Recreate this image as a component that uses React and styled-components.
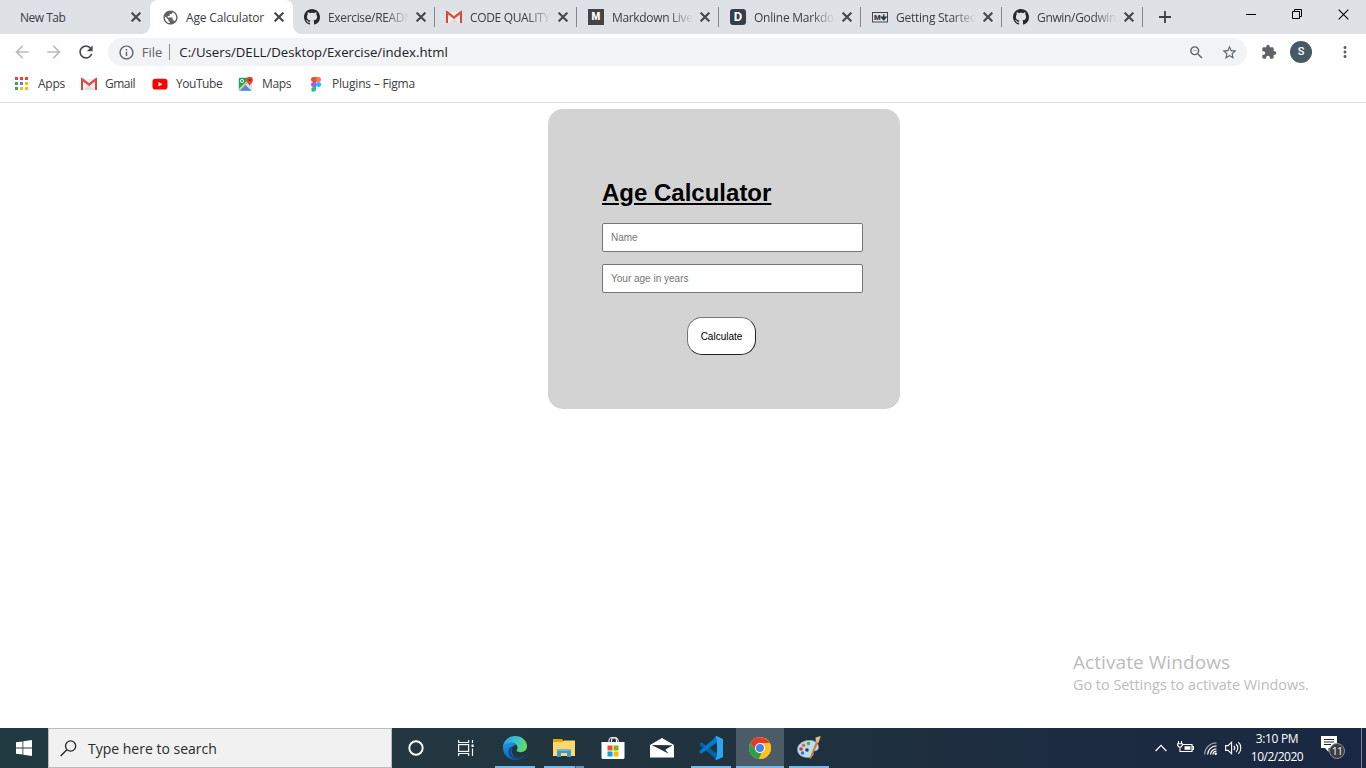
import React from 'react';
import styled, { createGlobalStyle, css } from 'styled-components';
import {
  MdArrowBack, MdArrowForward, MdRefresh, MdInfoOutline, MdZoomOut,
  MdStarBorder, MdExtension, MdMoreVert, MdPublic,
} from 'react-icons/md';

const GlobalStyle = createGlobalStyle`
  * { box-sizing: border-box; }
  body { margin: 0; overflow: hidden; font-family: "Open Sans", "Noto Sans", sans-serif; }
  svg { display: block; flex: none; }
`;

const Screen = styled.div`
  width: 1366px;
  height: 768px;
  display: flex;
  flex-direction: column;
  background: #fff;
`;

const Label = styled.span`
  flex: none;
  white-space: nowrap;
  font-size: ${(p) => p.$size || 12}px;
  letter-spacing: ${(p) => p.$track || 0}px;
  color: ${(p) => p.$color || '#3c4043'};
`;

/* ---------- tab strip ---------- */

const TabStrip = styled.div`
  height: 34px;
  flex: none;
  display: flex;
  background: #dee1e6;
`;

const Tab = styled.div`
  position: relative;
  width: ${(p) => p.$width}px;
  flex: none;
  display: flex;
  align-items: center;
  padding: 0 9.5px 0 ${(p) => p.$pad}px;
  ${(p) => p.$divider && css`
    &::after {
      content: '';
      position: absolute;
      right: 0;
      top: 7px;
      width: 1px;
      height: 20px;
      background: #85888c;
    }
  `}
  ${(p) => p.$active && css`
    background: #fff;
    border-radius: 8px 8px 0 0;
    &::before, &::after {
      content: '';
      position: absolute;
      bottom: 0;
      width: 8px;
      height: 8px;
    }
    &::before {
      left: -8px;
      background: radial-gradient(circle at 0 0, transparent 7.5px, #fff 8px);
    }
    &::after {
      right: -8px;
      background: radial-gradient(circle at 100% 0, transparent 7.5px, #fff 8px);
    }
  `}
`;

const TabIcon = styled.div`
  width: 16px;
  height: 16px;
  margin-right: 8px;
  flex: none;
`;

const TabTitle = styled.div`
  flex: 1;
  min-width: 0;
  overflow: hidden;
  margin-right: 7px;
  line-height: 18px;
  ${(p) => p.$fade && css`
    mask-image: linear-gradient(to right, #000 calc(100% - 24px), transparent);
  `}
`;

const LetterBadge = styled.div`
  width: 16px;
  height: 16px;
  display: flex;
  align-items: center;
  justify-content: center;
  border-radius: ${(p) => p.$radius}px;
  background: ${(p) => p.$bg};
  color: #fff;
  font: ${(p) => p.$weight} ${(p) => p.$size}px/16px "Roboto", sans-serif;
`;

const NewTabButton = styled.div`
  width: 44px;
  display: flex;
  align-items: center;
  justify-content: center;
`;

const WindowButtons = styled.div`
  margin-left: auto;
  display: flex;
  height: 28px;
`;

const WindowButton = styled.div`
  width: 46px;
  display: flex;
  align-items: center;
  justify-content: center;
`;

/* ---------- toolbar ---------- */

const Toolbar = styled.div`
  height: 36px;
  flex: none;
  display: flex;
  align-items: center;
  padding: 0 12px;
`;

const NavButton = styled.div`
  width: 20px;
  margin-right: 12px;
  display: flex;
  justify-content: center;
  color: ${(p) => (p.$disabled ? '#babcbe' : '#4a4d51')};
`;

const Omnibox = styled.div`
  width: 1150px;
  height: 28px;
  display: flex;
  align-items: center;
  padding: 0 9px 0 10px;
  border-radius: 14px;
  background: #f1f3f4;
  color: #5f6368;
`;

const OmniDivider = styled.div`
  width: 1px;
  height: 16px;
  margin: 0 9px 0 7px;
  background: #8c8f93;
`;

const OmniActions = styled.div`
  margin-left: auto;
  display: flex;
  gap: 16px;
`;

const ToolbarActions = styled.div`
  display: flex;
  align-items: center;
  margin-left: 14px;
  color: #5f6368;
`;

const Avatar = styled.div`
  width: 22px;
  height: 22px;
  margin: 0 24px 0 13px;
  border-radius: 50%;
  background: #455a64;
  color: #fff;
  text-align: center;
  font: 500 11px/22px "Roboto", sans-serif;
`;

/* ---------- bookmarks ---------- */

const Bookmarks = styled.div`
  height: 33px;
  flex: none;
  display: flex;
  padding: 0 0 5px 14px;
  border-bottom: 1px solid #d9dbde;
`;

const Bookmark = styled.div`
  width: ${(p) => p.$width}px;
  display: flex;
  align-items: center;
  gap: 8px;
`;

/* ---------- page ---------- */

const Page = styled.main`
  flex: 1;
  display: flex;
  flex-direction: column;
  align-items: flex-start;
  padding: 6px 57px 0 548px;
`;

const Card = styled.section`
  width: 352px;
  height: 300px;
  padding: 70px 37px 0 54px;
  border-radius: 15px;
  background: #d3d3d3;
  font-family: "Liberation Sans", Arial, sans-serif;
`;

const Heading = styled.h1`
  margin: 0 0 16px;
  font-size: 24px;
  line-height: 28px;
  font-weight: 700;
  color: #000;
  text-decoration: underline;
`;

const Field = styled.input`
  display: block;
  width: 261px;
  height: 29px;
  margin: 0 0 12px;
  padding: 0 8px;
  border: 1px solid #767676;
  border-radius: 2px;
  background: #fff;
  font: 10px "Liberation Sans", Arial, sans-serif;
  &::placeholder { color: #757575; }
`;

const Calculate = styled.button`
  display: block;
  width: 69px;
  height: 38px;
  margin: 24px 0 0 85px;
  padding: 0;
  border: 1px solid;
  border-color: #767676 #212121 #212121 #767676;
  border-radius: 15px;
  background: #fff;
  color: #000;
  font: 10px "Liberation Sans", Arial, sans-serif;
`;

const Watermark = styled.div`
  margin: auto 0 33px;
  align-self: flex-end;
  width: 236px;
  display: flex;
  flex-direction: column;
`;

const WatermarkLine = styled(Label)`
  line-height: ${(p) => p.$line}px;
  color: #bcbcbc;
`;

/* ---------- taskbar ---------- */

const Taskbar = styled.footer`
  height: 40px;
  flex: none;
  display: flex;
  background: linear-gradient(to right, #213a42 0, #22373f 30%, #20323f 55%, #1c2b40 80%, #1a2742 100%);
`;

const StartButton = styled.div`
  width: 48px;
  display: flex;
  align-items: center;
  justify-content: center;
`;

const SearchBox = styled.div`
  width: 344px;
  display: flex;
  align-items: center;
  gap: 11px;
  padding-left: 11px;
  border: 1px solid #bababa;
  background: #f1f1f1;
`;

const TaskItem = styled.div`
  position: relative;
  width: ${(p) => p.$width || 49}px;
  display: flex;
  align-items: center;
  justify-content: center;
  padding-right: 1px;
  ${(p) => p.$active && css`
    background: linear-gradient(#4c5c66, #4c5c66) 0 0 / 48px 100% no-repeat;
  `}
  ${(p) => p.$line && css`
    &::after {
      content: '';
      position: absolute;
      bottom: 0;
      left: ${p.$active ? 0 : 4}px;
      width: ${p.$active ? 48 : 40}px;
      height: 2px;
      background: ${p.$line === 'stack'
        ? 'linear-gradient(to right, #76b9ed 31px, #3d6480 31px, #3d6480 32px, #5c94bf 32px)'
        : '#76b9ed'};
    }
  `}
`;

const Tray = styled.div`
  margin-left: auto;
  display: flex;
  align-items: center;
  padding-right: 4px;
  border-right: 0;
`;

const Clock = styled.div`
  width: 60px;
  margin: 0 14px 0 5px;
  display: flex;
  flex-direction: column;
  align-items: center;
  line-height: 18px;
`;

const Notifications = styled.div`
  position: relative;
  width: 24px;
  height: 24px;
`;

const Count = styled.div`
  position: absolute;
  left: 8px;
  top: 7px;
  width: 16px;
  height: 16px;
  border: 1px solid #8b8f94;
  border-radius: 50%;
  background: #3a3d42;
  color: #fff;
  text-align: center;
  font-size: 10.5px;
  line-height: 14px;
  letter-spacing: -0.7px;
`;

const DesktopEdge = styled.div`
  width: 1px;
  height: 40px;
  margin-left: 16px;
  background: #7d8592;
`;

/* ---------- icons ---------- */

const Cross = ({ size = 8, width = 1.7, color = '#45484c' }) => (
  <svg width={size} height={size} viewBox="0 0 8 8">
    <path d="M.5 .5 7.5 7.5M7.5 .5 .5 7.5" stroke={color} strokeWidth={width} />
  </svg>
);

const GithubMark = () => (
  <svg width="16" height="16" viewBox="0 0 16 16" fill="#24292e">
    <path d="M8 0C3.58 0 0 3.58 0 8c0 3.54 2.29 6.53 5.47 7.59.4.07.55-.17.55-.38 0-.19-.01-.82-.01-1.49-2.01.37-2.53-.49-2.69-.94-.09-.23-.48-.94-.82-1.13-.28-.15-.68-.52-.01-.53.63-.01 1.08.58 1.23.82.72 1.21 1.87.87 2.33.66.07-.52.28-.87.51-1.07-1.78-.2-3.64-.89-3.64-3.95 0-.87.31-1.59.82-2.15-.08-.2-.36-1.02.08-2.12 0 0 .67-.21 2.2.82.64-.18 1.32-.27 2-.27.68 0 1.36.09 2 .27 1.53-1.04 2.2-.82 2.2-.82.44 1.1.16 1.92.08 2.12.51.56.82 1.27.82 2.15 0 3.07-1.87 3.75-3.65 3.95.29.25.54.73.54 1.48 0 1.07-.01 1.93-.01 2.2 0 .21.15.46.55.38A8.01 8.01 0 0 0 16 8c0-4.42-3.58-8-8-8z" />
  </svg>
);

const GmailIcon = () => (
  <svg width="16" height="16" viewBox="0 0 16 16">
    <path d="M1.5 3h13v11h-13z" fill="#f0eeee" />
    <path d="M3 13.8 8 9.5l5 4.3z" fill="#dcdada" />
    <path d="M1 14V3.2l7 5.3 7-5.3V14" fill="none" stroke="#d5483b" strokeWidth="2" />
    <path d="M1 3.2 8 8.6l7-5.4" fill="none" stroke="#de5145" strokeWidth="2.2" />
  </svg>
);

const MarkdownIcon = () => (
  <svg width="16" height="16" viewBox="0 0 16 16">
    <rect x=".5" y="3.5" width="15" height="9.5" fill="none" stroke="#45484c" />
    <text x="2" y="11" fontFamily="Roboto" fontWeight="900" fontSize="7.5" fill="#33363a">M</text>
    <path d="M11.7 5.2v4.5M9.4 8.2l2.3 2.6L14 8.2z" stroke="#33363a" strokeWidth="1.3" fill="#33363a" />
  </svg>
);

const AppsIcon = () => {
  const colors = ['#ea4335', '#ea4335', '#ea4335', '#34a853', '#4285f4', '#fbbc05', '#34a853', '#fbbc05', '#fbbc05'];
  return (
    <svg width="16" height="16" viewBox="0 0 16 16">
      {colors.map((fill, i) => (
        <rect key={i} x={1 + (i % 3) * 5} y={1 + Math.floor(i / 3) * 5} width="3" height="3" fill={fill} />
      ))}
    </svg>
  );
};

const YouTubeIcon = () => (
  <svg width="16" height="16" viewBox="0 0 16 16">
    <rect x=".5" y="2.8" width="15" height="10.8" rx="2.8" fill="#f00" />
    <path d="M6.5 5.9v4.6l4-2.3z" fill="#fff" />
  </svg>
);

const MapsIcon = () => (
  <svg width="16" height="16" viewBox="0 0 16 16">
    <rect x=".8" y="1.8" width="13" height="13" rx="1.2" fill="#1fa463" />
    <path d="M1 14.5 13.8 3v11.8H2z" fill="#e3e4e6" />
    <path d="M1.6 14.8 7.5 9l6 5.8z" fill="#4a8af4" />
    <path d="m1.2 13.5 10-10" stroke="#fbd34d" strokeWidth="1.5" />
    <circle cx="4" cy="5" r="1.6" fill="none" stroke="#fff" strokeWidth=".9" />
    <path d="M11.6 10.2c-.4-2.5-3-3.4-3-6.2a3 3 0 0 1 6.3 0c0 2.8-2.8 3.700-3.300 6.200z" fill="#ea4335" />
    <circle cx="11.700" cy="4" r="1.100" fill="#8c1d18" />
  </svg>
);

const FigmaIcon = () => (
  <svg width="16" height="16" viewBox="0 0 16 16">
    <path d="M8 1H5.500a2.500 2.500 0 0 0 0 5H8z" fill="#f24e1e" />
    <path d="M8 1h2.500a2.500 2.500 0 0 1 0 5H8z" fill="#ff7262" />
    <path d="M8 6H5.500a2.500 2.500 0 0 0 0 5H8z" fill="#a259ff" />
    <circle cx="10.500" cy="8.500" r="2.500" fill="#1abcfe" />
    <path d="M8 11H5.500A2.400 2.400 0 1 0 8 13.300z" fill="#0acf83" />
  </svg>
);

const WindowsLogo = () => (
  <svg width="16" height="16" viewBox="0 0 16 16" fill="#fff">
    <path d="M0 2.300 6.500 1.400v6.200H0zM7.300 1.300 16 0v7.600H7.300zM0 8.400h6.500v6.200L0 13.700zM7.300 8.400H16V16l-8.700-1.300z" />
  </svg>
);

const SearchIcon = () => (
  <svg width="17" height="17" viewBox="0 0 17 17" fill="none" stroke="#222" strokeWidth="1.300">
    <circle cx="10.600" cy="6" r="5.100" />
    <path d="M6.900 9.700.6 16" />
  </svg>
);

const TaskViewIcon = () => (
  <svg width="18" height="16" viewBox="0 0 18 16" fill="none" stroke="#f4f6f6" strokeWidth="1.200">
    <rect x="1.600" y="4.600" width="10" height="6.800" />
    <path d="M1.600 0v2.500h10V0M1.600 16v-2.500h10V16M15.500 0v3M15.500 8.500V16" />
    <rect x="14.500" y="4.500" width="2.200" height="2.500" fill="#fff" stroke="none" />
  </svg>
);

const EdgeIcon = () => (
  <svg width="24" height="24" viewBox="0 0 24 24">
    <defs>
      <linearGradient id="edgeTop" x1="0" y1=".3" x2="1" y2=".5">
        <stop offset="0" stopColor="#2aa5dc" />
        <stop offset=".5" stopColor="#35c1d0" />
        <stop offset="1" stopColor="#6bdc57" />
      </linearGradient>
      <linearGradient id="edgeLeft" x1="0" y1="0" x2=".4" y2="1">
        <stop offset="0" stopColor="#1f9be0" />
        <stop offset="1" stopColor="#0f63b8" />
      </linearGradient>
    </defs>
    <path d="M0 12C0 5 5.500 0 12 0c7.200 0 12 5 12 10 0 4-3 6.200-6.500 6.200-2.600 0-4-.9-4-1.900 0-.6 1-1 1-2.600C14.500 9 12 7 8.500 7 3.500 7 .4 10 0 12z" fill="url(#edgeTop)" />
    <path d="M0 12C.5 8.500 4 6.500 8 6.500c2.500 0 4.500 1 5.600 2.300C10 9 8.300 12 8.500 15c.3 4.200 4 7.600 7.500 8.200A12 12 0 0 1 0 12z" fill="url(#edgeLeft)" />
    <path d="M10 10.500c-2.200 2-2.800 5-1.500 7.700 2.400 4.800 9.500 4.500 13.700.6.400-.3.700 0 .4.400A12 12 0 0 1 14 23.800C8.500 23.500 5 19 5.500 14.800c.3-2.500 2.200-4 4.500-4.300z" fill="#114a8b" />
  </svg>
);

const ExplorerIcon = () => (
  <svg width="22" height="18" viewBox="0 0 22 18">
    <path d="M0 0h9l1.500 2H22v15H0z" fill="#e2a50c" />
    <path d="M0 3h9.500L11 1.500h11V17H0z" fill="#ffd868" />
    <path d="M4 18v-7.500h14V18h-4v-4H8v4z" fill="#3f97d8" />
    <path d="M4 10.500h14V12H4z" fill="#5fb2ea" />
  </svg>
);

const StoreIcon = () => (
  <svg width="24" height="24" viewBox="0 0 24 24">
    <path d="M8 7V4.500a3 3 0 0 1 3-3h1.500a3 3 0 0 1 3 3V7M10.500 6.500V4.600a3 3 0 0 1 3-3h.3a3.400 3.400 0 0 1 3.400 3.400V7" fill="none" stroke="#e8ebec" strokeWidth="1.100" />
    <path d="M.5 6h23v15.500a1.500 1.500 0 0 1-1.500 1.500H2A1.500 1.500 0 0 1 .5 21.500z" fill="#fff" />
    <path d="M6.500 9.500h5v5h-5z" fill="#f25022" />
    <path d="M12.500 9.500h5v5h-5z" fill="#7fba00" />
    <path d="M6.500 15.500h5v5h-5z" fill="#00a4ef" />
    <path d="M12.500 15.500h5v5h-5z" fill="#ffb900" />
  </svg>
);

const MailIcon = () => (
  <svg width="24" height="20" viewBox="0 0 24 20">
    <path d="M0 7 12 0l12 7v12.500H0z" fill="#fff" />
    <path d="m1.500 7 21 .2-7.200 4.600 3.500 4L9.500 11z" fill="#20323c" />
  </svg>
);

const VSCodeIcon = () => (
  <svg width="24" height="24" viewBox="0 0 24 24">
    <path d="m.5 7.800 1.800-1.600L18 17.800V24L1 9.200z" fill="#0065a9" />
    <path d="m.5 16.200 1.800 1.600L18 6.200V0L.7 14.800z" fill="#007acc" />
    <path d="M17.500 0 24 3v18l-6.500 3c-.6 0-1-.4-1-1L18 20V4l-1.500-3c0-.6.400-1 1-1z" fill="#2ba6f0" />
  </svg>
);

const ChromeIcon = () => (
  <svg width="22" height="22" viewBox="0 0 22 22">
    <circle cx="11" cy="11" r="11" fill="#fbc116" />
    <path d="M11 11 6.700 13.500 1.500 5.500A11 11 0 0 1 20.500 6H11z" fill="#e33b2e" />
    <path d="M1.500 5.500 6.670 13.500a5 5 0 0 0 5.800 2.300L9.800 21.940A11 11 0 0 1 1.500 5.500z" fill="#2f9e4f" />
    <path d="M11 6h9.800A11 11 0 0 1 9.800 21.940l5.530-8.440z" fill="#fcc31e" />
    <circle cx="11" cy="11" r="5" fill="#fff" />
    <circle cx="11" cy="11" r="4" fill="#4482ee" />
  </svg>
);

const PaintIcon = () => (
  <svg width="24" height="24" viewBox="0 0 24 24">
    <path d="M11 4.500c6-.7 10.500 2 10.500 7 0 2-1.500 3-3.500 3.200-2 .2-2.500 1-2 2.600.7 2.500-1.500 4.200-5 4.200C5 21.500.5 18.500.5 13.500c0-4.800 4.500-8.400 10.500-9z" fill="#b9dcef" stroke="#8fb9d0" strokeWidth=".6" />
    <circle cx="4" cy="13" r="1.800" fill="#d8322b" />
    <circle cx="6.500" cy="9.300" r="1.700" fill="#e9613c" />
    <circle cx="11.500" cy="7.500" r="1.700" fill="#56a83b" />
    <circle cx="5.500" cy="17" r="1.700" fill="#3f6fc5" />
    <circle cx="10" cy="14" r="1.800" fill="#25414f" />
    <path d="m19.200 5.500 2 1L14 22.500l-1.200.8.100-1.700z" fill="#d6791b" />
    <path d="M18.500 1.500 23.700 0l-2.200 7-2.700-1.200z" fill="#e3bb84" />
  </svg>
);

const ChevronUp = () => (
  <svg width="12" height="8" viewBox="0 0 12 8" fill="none" stroke="#fff" strokeWidth="1.200">
    <path d="M.6 7 6 1.300 11.400 7" />
  </svg>
);

const BatteryIcon = () => (
  <svg width="17" height="14" viewBox="0 0 17 14">
    <path d="M6 3.500h9v7H5.500M15.500 5.500h1v3h-1" fill="none" stroke="#fff" strokeWidth="1.200" />
    <path d="M7.500 5.200h6v3.600h-6z" fill="#fff" />
    <path d="M1.500 0v2.500M4.500 0v2.500M.6 2.800h4.800v1.700L4 6H2L.6 4.500zM3 6v4.500h4" fill="none" stroke="#fff" strokeWidth="1.100" />
  </svg>
);

const WifiIcon = () => (
  <svg width="13" height="13" viewBox="0 0 13 13" fill="none" strokeWidth="1.200">
    <path d="M.6 12.500A12 12 0 0 1 12.500.8" stroke="#9aa3b0" />
    <path d="M3.600 12.500a9 9 0 0 1 8.900-8.600" stroke="#fff" />
    <path d="M6.500 12.500a6 6 0 0 1 6-5.700" stroke="#fff" />
    <path d="M8.900 12.500a3.500 3.500 0 0 1 3.600-3.400" stroke="#fff" />
    <circle cx="11.700" cy="11.700" r="1.200" fill="#fff" />
  </svg>
);

const SpeakerIcon = () => (
  <svg width="17" height="14" viewBox="0 0 17 14" fill="none" stroke="#fff" strokeWidth="1.100">
    <path d="M.6 4.600h2.500L6.600 1.300v11.400L3.100 9.400H.6z" />
    <path d="M8.800 4.800a3.200 3.200 0 0 1 0 4.400M11.100 3a5.600 5.600 0 0 1 0 8M13.400 1.200a8.200 8.200 0 0 1 0 11.600" />
  </svg>
);

const NoticeIcon = () => (
  <svg width="17" height="17" viewBox="0 0 17 17">
    <path d="M0 0h16v12H7.500v4L4 12H0z" fill="#fff" />
    <path d="M3 3.500h10M3 6h10M3 8.500h7" stroke="#1a2742" strokeWidth="1" />
  </svg>
);

/* ---------- data ---------- */

const tabs = [
  { title: 'New Tab', width: 150, pad: 20, track: -0.5 },
  { title: 'Age Calculator', width: 143, pad: 12, track: -0.17, active: true, icon: <MdPublic size={17} color="#5f6368" /> },
  { title: 'Exercise/README', width: 142, pad: 11, icon: <GithubMark />, fade: true },
  { title: 'CODE QUALITY', width: 142, pad: 11, icon: <GmailIcon />, fade: true },
  { title: 'Markdown Live', width: 142, pad: 11, icon: <LetterBadge $bg="#444" $radius={0} $weight={900} $size={10}>M</LetterBadge>, fade: true },
  { title: 'Online Markdown', width: 142, pad: 11, track: -0.24, icon: <LetterBadge $bg="#373d49" $radius={3} $weight={700} $size={13}>D</LetterBadge>, fade: true },
  { title: 'Getting Started', width: 141, pad: 11, track: -0.25, icon: <MarkdownIcon />, fade: true },
  { title: 'Gnwin/Godwin', width: 141, pad: 11, icon: <GithubMark />, fade: true },
];

const bookmarks = [
  { name: 'Apps', width: 67, track: -0.25, icon: <AppsIcon /> },
  { name: 'Gmail', width: 71, track: -0.5, icon: <GmailIcon /> },
  { name: 'YouTube', width: 86, track: -0.45, icon: <YouTubeIcon /> },
  { name: 'Maps', width: 70, track: -0.38, icon: <MapsIcon /> },
  { name: 'Plugins – Figma', width: 120, track: -0.2, icon: <FigmaIcon /> },
];

export default function App() {
  return (
    <>
      <GlobalStyle />
      <Screen>
        <TabStrip>
          {tabs.map((t) => (
            <Tab key={t.title} $width={t.width} $pad={t.pad} $active={t.active} $divider={t.fade}>
              {t.icon && <TabIcon>{t.icon}</TabIcon>}
              <TabTitle $fade={t.fade}><Label $track={t.track ?? -0.34}>{t.title}</Label></TabTitle>
              <Cross size={10} />
            </Tab>
          ))}
          <NewTabButton>
            <svg width="12" height="12" viewBox="0 0 12 12"><path d="M6 0v12M0 6h12" stroke="#3c4043" strokeWidth="1.8" /></svg>
          </NewTabButton>
          <WindowButtons>
            <WindowButton><svg width="10" height="10"><path d="M0 5.500h10" stroke="#000" /></svg></WindowButton>
            <WindowButton>
              <svg width="11" height="11" fill="none" stroke="#000"><path d="M.5 2.500h7v7h-7zM2.500 2.500v-2h7v7h-2" /></svg>
            </WindowButton>
            <WindowButton><Cross size={11} width={0.8} color="#000" /></WindowButton>
          </WindowButtons>
        </TabStrip>

        <Toolbar>
          <NavButton $disabled><MdArrowBack size={20} /></NavButton>
          <NavButton $disabled><MdArrowForward size={20} /></NavButton>
          <NavButton><MdRefresh size={20} /></NavButton>
          <Omnibox>
            <MdInfoOutline size={17} />
            <Label $size={13} $color="#5f6368" style={undefined}>&nbsp;&nbsp;File</Label>
            <OmniDivider />
            <Label $size={13.2} $color="#202124">C:/Users/DELL/Desktop/Exercise/index.html</Label>
            <OmniActions>
              <MdZoomOut size={17} />
              <MdStarBorder size={17} />
            </OmniActions>
          </Omnibox>
          <ToolbarActions>
            <MdExtension size={16} />
            <Avatar>S</Avatar>
            <MdMoreVert size={18} />
          </ToolbarActions>
        </Toolbar>

        <Bookmarks>
          {bookmarks.map((b) => (
            <Bookmark key={b.name} $width={b.width}>
              {b.icon}
              <Label $track={b.track}>{b.name}</Label>
            </Bookmark>
          ))}
        </Bookmarks>

        <Page>
          <Card>
            <Heading>Age Calculator</Heading>
            <Field placeholder="Name" />
            <Field placeholder="Your age in years" />
            <Calculate>Calculate</Calculate>
          </Card>
          <Watermark>
            <WatermarkLine $size={19} $track={0.07} $line={26}>Activate Windows</WatermarkLine>
            <WatermarkLine $size={14.4} $line={20}>Go to Settings to activate Windows.</WatermarkLine>
          </Watermark>
        </Page>

        <Taskbar>
          <StartButton><WindowsLogo /></StartButton>
          <SearchBox>
            <SearchIcon />
            <Label $size={14} $color="#2b2b2b">Type here to search</Label>
          </SearchBox>
          <TaskItem>
            <svg width="16" height="16" viewBox="0 0 16 16"><circle cx="8" cy="8" r="6.700" fill="none" stroke="#fff" strokeWidth="1.900" /></svg>
          </TaskItem>
          <TaskItem $width={50}><TaskViewIcon /></TaskItem>
          <TaskItem $line="solid"><EdgeIcon /></TaskItem>
          <TaskItem $line="stack"><ExplorerIcon /></TaskItem>
          <TaskItem><StoreIcon /></TaskItem>
          <TaskItem><MailIcon /></TaskItem>
          <TaskItem $line="solid"><VSCodeIcon /></TaskItem>
          <TaskItem $line="solid" $active><ChromeIcon /></TaskItem>
          <TaskItem $line="solid"><PaintIcon /></TaskItem>
          <Tray>
            <ChevronUp />
            <BatterySlot><BatteryIcon /></BatterySlot>
            <WifiIcon />
            <SpeakerSlot><SpeakerIcon /></SpeakerSlot>
            <Clock>
              <Label $track={-0.35} $color="#fff">3:10 PM</Label>
              <Label $track={-0.5} $color="#fff">10/2/2020</Label>
            </Clock>
            <Notifications>
              <NoticeIcon />
              <Count>11</Count>
            </Notifications>
            <DesktopEdge />
          </Tray>
        </Taskbar>
      </Screen>
    </>
  );
}

const BatterySlot = styled.div`
  margin: 0 10px;
`;

const SpeakerSlot = styled.div`
  margin-left: 8px;
`;
